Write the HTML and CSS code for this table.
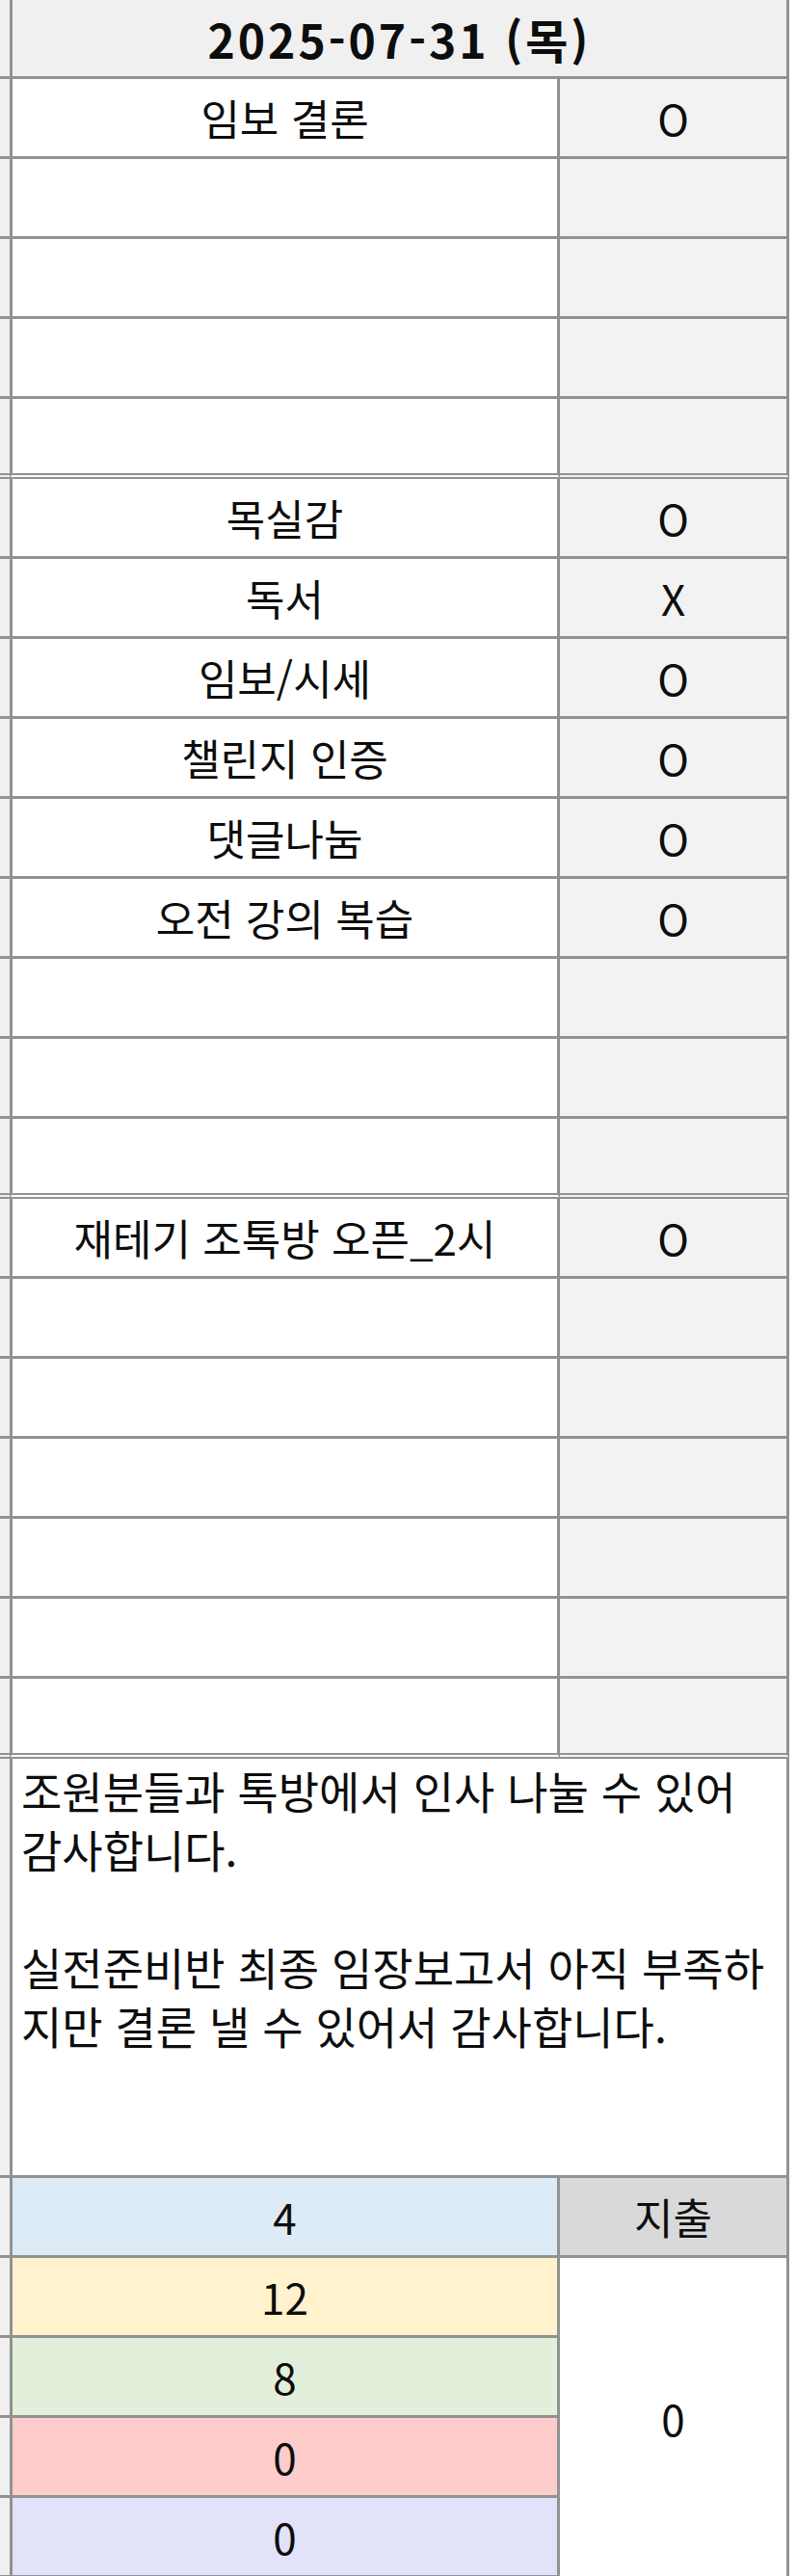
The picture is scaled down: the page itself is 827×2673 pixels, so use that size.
FILE: index.html
```html
<!DOCTYPE html>
<html lang="ko">
<head>
<meta charset="utf-8">
<title>2025-07-31 (목)</title>
<link rel="stylesheet" href="styles.css">
</head>
<body>
<div class="sheet">
  <div class="row head">
    <div class="strip"></div>
    <div class="cell title">2025-07-31 (목)</div>
    <div class="edge"></div>
  </div>

  <div class="block">
    <div class="row"><div class="strip"></div><div class="cell task">임보 결론</div><div class="cell mark">O</div><div class="edge"></div></div>
    <div class="row"><div class="strip"></div><div class="cell task"></div><div class="cell mark"></div><div class="edge"></div></div>
    <div class="row"><div class="strip"></div><div class="cell task"></div><div class="cell mark"></div><div class="edge"></div></div>
    <div class="row"><div class="strip"></div><div class="cell task"></div><div class="cell mark"></div><div class="edge"></div></div>
    <div class="row"><div class="strip"></div><div class="cell task"></div><div class="cell mark"></div><div class="edge"></div></div>
  </div>

  <div class="block">
    <div class="row"><div class="strip"></div><div class="cell task">목실감</div><div class="cell mark">O</div><div class="edge"></div></div>
    <div class="row"><div class="strip"></div><div class="cell task">독서</div><div class="cell mark">X</div><div class="edge"></div></div>
    <div class="row"><div class="strip"></div><div class="cell task">임보/시세</div><div class="cell mark">O</div><div class="edge"></div></div>
    <div class="row"><div class="strip"></div><div class="cell task">챌린지 인증</div><div class="cell mark">O</div><div class="edge"></div></div>
    <div class="row"><div class="strip"></div><div class="cell task">댓글나눔</div><div class="cell mark">O</div><div class="edge"></div></div>
    <div class="row"><div class="strip"></div><div class="cell task">오전 강의 복습</div><div class="cell mark">O</div><div class="edge"></div></div>
    <div class="row"><div class="strip"></div><div class="cell task"></div><div class="cell mark"></div><div class="edge"></div></div>
    <div class="row"><div class="strip"></div><div class="cell task"></div><div class="cell mark"></div><div class="edge"></div></div>
    <div class="row"><div class="strip"></div><div class="cell task"></div><div class="cell mark"></div><div class="edge"></div></div>
  </div>

  <div class="block">
    <div class="row"><div class="strip"></div><div class="cell task">재테기 조톡방 오픈_2시</div><div class="cell mark">O</div><div class="edge"></div></div>
    <div class="row"><div class="strip"></div><div class="cell task"></div><div class="cell mark"></div><div class="edge"></div></div>
    <div class="row"><div class="strip"></div><div class="cell task"></div><div class="cell mark"></div><div class="edge"></div></div>
    <div class="row"><div class="strip"></div><div class="cell task"></div><div class="cell mark"></div><div class="edge"></div></div>
    <div class="row"><div class="strip"></div><div class="cell task"></div><div class="cell mark"></div><div class="edge"></div></div>
    <div class="row"><div class="strip"></div><div class="cell task"></div><div class="cell mark"></div><div class="edge"></div></div>
    <div class="row"><div class="strip"></div><div class="cell task"></div><div class="cell mark"></div><div class="edge"></div></div>
  </div>

  <div class="row note-row">
    <div class="strip"></div>
    <div class="cell note">조원분들과 톡방에서 인사 나눌 수 있어<br>감사합니다.<br><br>실전준비반 최종 임장보고서 아직 부족하<br>지만 결론 낼 수 있어서 감사합니다.</div>
    <div class="edge"></div>
  </div>

  <div class="totals">
    <div class="strip"></div>
    <div class="cell num c-blue">4</div>
    <div class="cell spend">지출</div>
    <div class="edge"></div>

    <div class="strip"></div>
    <div class="cell num c-yellow">12</div>
    <div class="cell spend-val">0</div>
    <div class="edge"></div>

    <div class="strip"></div>
    <div class="cell num c-green">8</div>
    <div class="edge"></div>

    <div class="strip"></div>
    <div class="cell num c-red">0</div>
    <div class="edge"></div>

    <div class="strip"></div>
    <div class="cell num c-purple last">0</div>
    <div class="edge"></div>
  </div>
</div>
</body>
</html>
```

FILE: styles.css
```css
html, body {
  margin: 0;
  padding: 0;
  background: #ffffff;
}

body {
  font-family: "Noto Sans CJK KR", "Noto Sans", sans-serif;
  color: #0d0d0d;
  font-size: 44px;
}

.sheet {
  width: 827px;
  overflow: hidden;
}

.row {
  display: grid;
  grid-template-columns: 10px 571px 238px 1fr;
  height: 83px;
}

.head {
  height: 82px;
}

.strip {
  background: #f0f0f0;
  border-bottom: 3px solid #929292;
}

.edge {
  background: #ffffff;
}

.cell {
  box-sizing: border-box;
  display: flex;
  align-items: center;
  justify-content: center;
  border-bottom: 3px solid #929292;
  white-space: nowrap;
}

.task {
  background: #ffffff;
  border-left: 3px solid #929292;
  border-right: 3px solid #929292;
}

.mark {
  background: #f2f2f2;
  border-right: 3px solid #929292;
}

.title {
  grid-column: 2 / 4;
  background: #f0f0f0;
  border-left: 3px solid #929292;
  border-right: 3px solid #929292;
  font-weight: 700;
  font-size: 48px;
  letter-spacing: 3px;
}

.block .row:last-child .strip,
.block .row:last-child .cell {
  border-bottom: 6px double #929292;
}

.note-row {
  height: 435px;
}

.note {
  grid-column: 2 / 4;
  display: block;
  background: #ffffff;
  border-left: 3px solid #929292;
  border-right: 3px solid #929292;
  padding: 2px 0 0 9px;
  font-size: 46px;
  line-height: 61px;
}

.totals {
  display: grid;
  grid-template-columns: 10px 571px 238px 1fr;
  grid-template-rows: repeat(5, 83px);
}

.num {
  border-left: 3px solid #929292;
  border-right: 3px solid #929292;
}

.spend {
  background: #d9d9d9;
  border-right: 3px solid #929292;
}

.spend-val {
  grid-column: 3;
  grid-row: 2 / 6;
  background: #ffffff;
  border-right: 3px solid #929292;
  border-bottom: none;
}

.c-blue { background: #ddebf7; }
.c-yellow { background: #fff2cc; }
.c-green { background: #e2efda; }
.c-red { background: #ffcccc; }
.c-purple { background: #e2e2fa; }
```
